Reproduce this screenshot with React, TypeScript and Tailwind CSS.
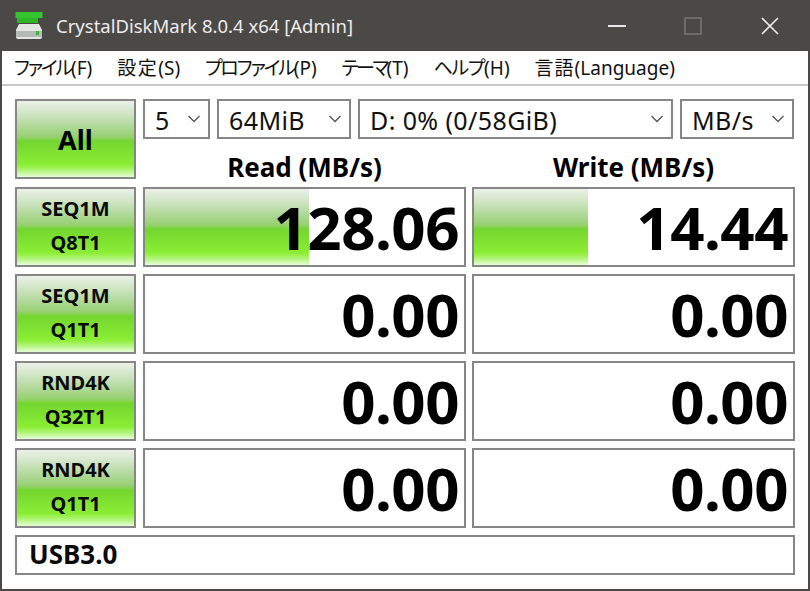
import React from 'react';

const uiFont = "font-['Noto_Sans','Noto_Sans_CJK_JP',sans-serif]";

const green = 'bg-[linear-gradient(to_bottom,#eaf1e7_0%,#d3e6c8_15%,#b2d99c_32%,#97d071_47%,#74d62f_53%,#8bee34_84%,#b4f57e_92%,#e8fcd8_100%)]';

const menus = [
  { jp: 'ファイル', en: '(F)', track: 'tracking-[-2.2px]' },
  { jp: '設定', en: '(S)', track: 'tracking-[1.5px]' },
  { jp: 'プロファイル', en: '(P)', track: 'tracking-[-2.2px]' },
  { jp: 'テーマ', en: '(T)', track: 'tracking-[-2.7px]' },
  { jp: 'ヘルプ', en: '(H)', track: 'tracking-[-1.3px]' },
  { jp: '言語', en: '(Language)', track: 'tracking-[1px]' },
];

const rows = [
  { a: 'SEQ1M', b: 'Q8T1', read: '128.06', write: '14.44', readBar: 164, writeBar: 114 },
  { a: 'SEQ1M', b: 'Q1T1', read: '0.00', write: '0.00', readBar: 0, writeBar: 0 },
  { a: 'RND4K', b: 'Q32T1', read: '0.00', write: '0.00', readBar: 0, writeBar: 0 },
  { a: 'RND4K', b: 'Q1T1', read: '0.00', write: '0.00', readBar: 0, writeBar: 0 },
];

const Chevron = () => (
  <svg width="14" height="8" viewBox="0 0 14 8" fill="none" stroke="#555" strokeWidth="1.3" className="shrink-0">
    <path d="M1.5 1 L7 6.5 L12.5 1" />
  </svg>
);

const Combo = ({ label, className }: { label: string; className: string }) => (
  <div className={`flex h-10 items-center justify-between border-2 border-[#868686] bg-white pl-[10px] pr-[7px] text-[25px] leading-none tracking-[0.4px] text-[#111] ${className}`}>
    <span className="pt-[3px]">{label}</span>
    <Chevron />
  </div>
);

const Score = ({ value, bar }: { value: string; bar: number }) => (
  <div className="relative flex h-full flex-1 items-center justify-end overflow-hidden border-2 border-[#868686] bg-white pr-[5px]">
    {bar > 0 && <div className={`absolute inset-y-0 left-0 ${green}`} style={{ width: bar }} />}
    <span className="relative text-[60px] font-bold leading-none tracking-[-0.5px] text-black">{value}</span>
  </div>
);

const App: React.FC = () => {
  return (
    <div className={`flex h-[591px] w-[810px] flex-col overflow-hidden bg-[#4a4946] ${uiFont}`}>
      <div className="flex h-[51px] shrink-0 items-center pl-[15px]">
        <svg width="28" height="27" viewBox="0 0 28 27" className="shrink-0">
          <rect x="0.5" y="0" width="27" height="6" fill="#35c52f" />
          <rect x="2" y="6" width="21" height="5" fill="#2fb52a" />
          <path d="M4 12 H24 L27 18 V25 Q27 27 25 27 H3 Q1 27 1 25 V18 Z" fill="#e4e6e4" />
          <rect x="1" y="19" width="26" height="6" fill="#b5bab5" />
          <rect x="21" y="19" width="3" height="4" fill="#3fb53a" />
        </svg>
        <span className="ml-[13px] text-[18.5px] text-[#ececec]">CrystalDiskMark 8.0.4 x64 [Admin]</span>
        <div className="ml-auto flex items-center">
          <svg width="18" height="18" viewBox="0 0 18 18" className="mr-[58px]">
            <rect x="0" y="8" width="18" height="2" fill="#e8e8e8" />
          </svg>
          <svg width="18" height="18" viewBox="0 0 18 18" fill="none" stroke="#777" strokeWidth="1.5" className="mr-[59px]">
            <rect x="1" y="1" width="16" height="16" />
          </svg>
          <svg width="18" height="18" viewBox="0 0 18 18" fill="none" stroke="#f0f0f0" strokeWidth="1.6" className="mr-[31px]">
            <path d="M1 1 L17 17 M17 1 L1 17" />
          </svg>
        </div>
      </div>

      <div className="mx-[2px] mb-[2px] flex min-h-0 flex-1 flex-col bg-white">
        <div className="flex h-[35px] shrink-0 items-center gap-[25px] border-b-2 border-[#c8c8c8] bg-white pl-[12px] pt-[2px] text-[19px] text-[#111]">
          {menus.map(m => (
            <span key={m.en}>
              <span className={`[font-feature-settings:'palt'] ${m.track}`}>{m.jp}</span>
              {m.en}
            </span>
          ))}
        </div>

        <div className="flex flex-col bg-white pl-[13px] pr-[13px] pt-[13px]">
          <div className="flex h-[87px] gap-[7px]">
            <div className={`flex h-20 w-[121px] shrink-0 items-center justify-center border-2 border-[#868686] pt-[2px] text-[27px] font-bold text-black ${green}`}>
              All
            </div>
            <div className="flex-1">
              <div className="flex gap-[7px]">
                <Combo label="5" className="w-[67px]" />
                <Combo label="64MiB" className="w-[134px]" />
                <Combo label="D: 0% (0/58GiB)" className="w-[315px]" />
                <Combo label="MB/s" className="w-[114px]" />
              </div>
              <div className="flex gap-[6px] pt-[11px] text-center text-[26px] font-bold leading-[34px] text-black">
                <div className="flex-1">Read (MB/s)</div>
                <div className="flex-1">Write (MB/s)</div>
              </div>
            </div>
          </div>

          <div className="flex flex-col gap-[7.33px] pt-[1px]">
            {rows.map((r, i) => (
              <div key={i} className="flex h-[79.7px] gap-[7px]">
                <div className={`flex w-[121px] shrink-0 flex-col items-center justify-center border-2 border-[#868686] pb-[2px] text-[20px] font-bold leading-[34px] text-[#0a0a0a] ${green}`}>
                  <span>{r.a}</span>
                  <span>{r.b}</span>
                </div>
                <div className="flex flex-1 gap-[6px]">
                  <Score value={r.read} bar={r.readBar} />
                  <Score value={r.write} bar={r.writeBar} />
                </div>
              </div>
            ))}
          </div>

          <div className="mt-[7px] flex h-[40px] items-center border-2 border-[#868686] bg-white pl-[12px] text-[26px] font-bold text-[#0a0a0a]">
            USB3.0
          </div>
        </div>
      </div>
    </div>
  );
};

export default App;
